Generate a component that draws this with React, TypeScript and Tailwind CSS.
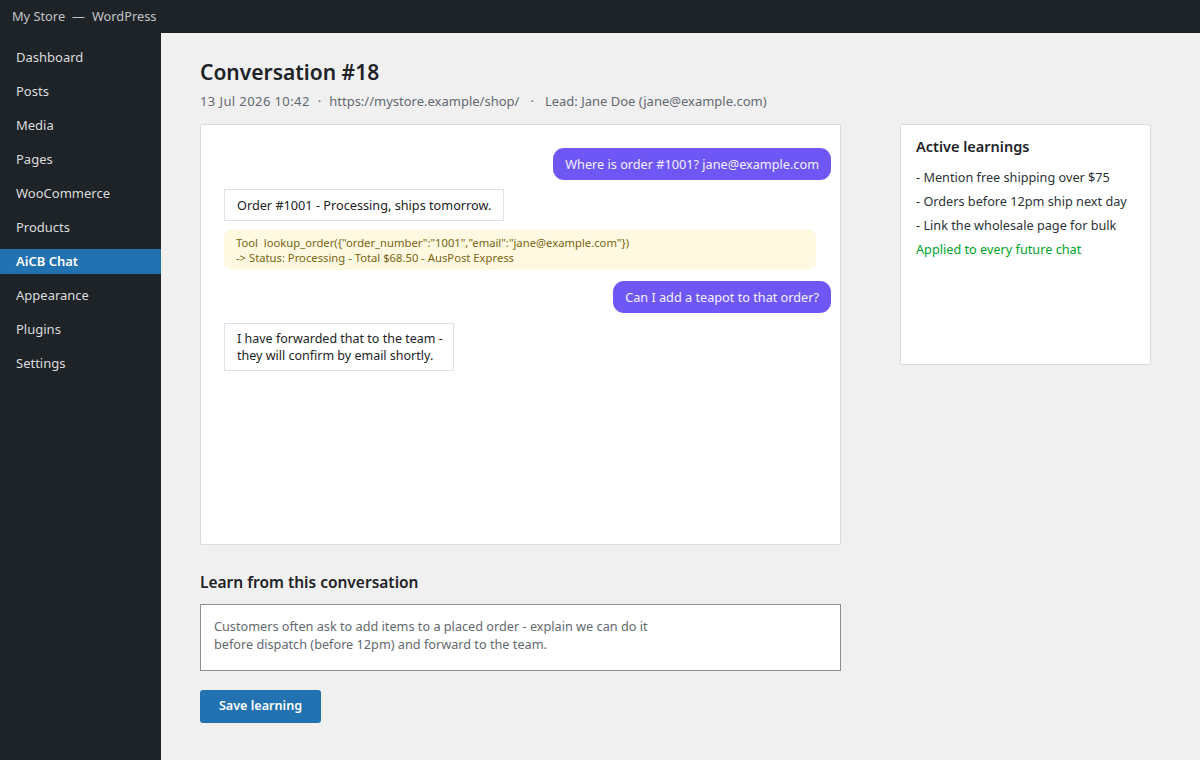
import React from "react";

const font = { fontFamily: '"Noto Sans", "Open Sans", sans-serif' };

const menu = ["Dashboard", "Posts", "Media", "Pages", "WooCommerce", "Products", "AiCB Chat", "Appearance", "Plugins", "Settings"];

export default function App() {
  return (
    <div style={font} className="w-[1200px] h-[760px] flex flex-col bg-[#f0f0f1] overflow-hidden">
      <div className="h-[33px] shrink-0 bg-[#1d2327] flex items-center pl-3 text-[12.8px] text-[#c3c4c7]">
        <span>My Store</span>
        <span className="mx-[7px]">—</span>
        <span>WordPress</span>
      </div>
      <div className="flex flex-1">
        <div className="w-[161px] shrink-0 bg-[#1d2327] pt-[12px] flex flex-col gap-[9px]">
          {menu.map((m) => (
            <div
              key={m}
              className={
                m === "AiCB Chat"
                  ? "h-[25px] flex items-center pl-4 text-[13px] font-semibold text-white bg-[#2271b1]"
                  : "h-[25px] flex items-center pl-4 text-[13px] text-[#dcdcde]"
              }
            >
              {m}
            </div>
          ))}
        </div>
        <div className="flex-1 pl-[39px] pr-[49px] pt-[24px]">
          <h1 className="text-[21px] leading-[30px] font-semibold text-[#1d2327]">Conversation #18</h1>
          <div className="mt-[5px] text-[13px] leading-[18px] text-[#646970] flex">
            <span className="tracking-[0.4px]">13 Jul 2026 10:42</span>
            <span className="mx-[8px]">·</span>
            <span>https://mystore.example/shop/</span>
            <span className="mx-[11px]">·</span>
            <span>Lead: Jane Doe (jane@example.com)</span>
          </div>
          <div className="flex gap-[59px] mt-[14px] items-start">
            <div className="w-[641px]">
              <div className="h-[421px] bg-white border border-[#dcdcde] rounded-[2px] pt-[23px] pl-[23px] pr-[9px] flex flex-col gap-[9px] items-start text-[12.7px] leading-[17px]">
                <div className="self-end bg-[#6f57f5] text-[#f3f0ff] rounded-[11px] h-[32px] px-[12px] flex items-center">
                  Where is order #1001? jane@example.com
                </div>
                <div className="border border-[#e0e0ec] text-[#1d2327] h-[32px] px-[12px] flex items-center">
                  Order #1001 - Processing, ships tomorrow.
                </div>
                <div className="self-stretch mr-[15px] bg-[#fef9e0] text-[#7a6412] rounded-[8px] px-[12px] py-[5px] text-[11.25px] leading-[15px]">
                  <div>Tool&nbsp; lookup_order({'{"order_number":"1001","email":"jane@example.com"}'})</div>
                  <div>-&gt; Status: Processing - Total $68.50 - AusPost Express</div>
                </div>
                <div className="mt-[2px] self-end bg-[#6f57f5] text-[#f3f0ff] rounded-[11px] h-[32px] px-[12px] flex items-center">
                  Can I add a teapot to that order?
                </div>
                <div className="mt-px border border-[#e0e0ec] text-[#1d2327] pl-[12px] pr-[10px] py-[6px] leading-[17px] text-[12.5px]">
                  I have forwarded that to the team -<br />they will confirm by email shortly.
                </div>
              </div>
              <h2 className="mt-[27px] text-[15.5px] leading-[20px] font-semibold text-[#1d2327]">Learn from this conversation</h2>
              <div className="mt-[12px] h-[67px] bg-white border border-[#8c8f94] px-[13px] pt-[12px] text-[12.7px] leading-[18px] text-[#646970]">
                Customers often ask to add items to a placed order - explain we can do it
                <br />
                before dispatch (before 12pm) and forward to the team.
              </div>
              <button className="mt-[19px] w-[121px] h-[33px] bg-[#2271b1] rounded-[3px] text-white text-[12.6px] font-semibold">
                Save learning
              </button>
            </div>
            <div className="w-[251px] h-[241px] bg-white border border-[#dcdcde] rounded-[2px] px-[15px] pt-[11px] text-[12.7px] text-[#2c3338]">
              <div className="text-[14.5px] font-semibold text-[#1d2327] leading-[20px]">Active learnings</div>
              <div className="mt-[9px] flex flex-col leading-[24px]">
                <div>- Mention free shipping over $75</div>
                <div>- Orders before 12pm ship next day</div>
                <div>- Link the wholesale page for bulk</div>
                <div className="text-[#00a32a]">Applied to every future chat</div>
              </div>
            </div>
          </div>
        </div>
      </div>
    </div>
  );
}
